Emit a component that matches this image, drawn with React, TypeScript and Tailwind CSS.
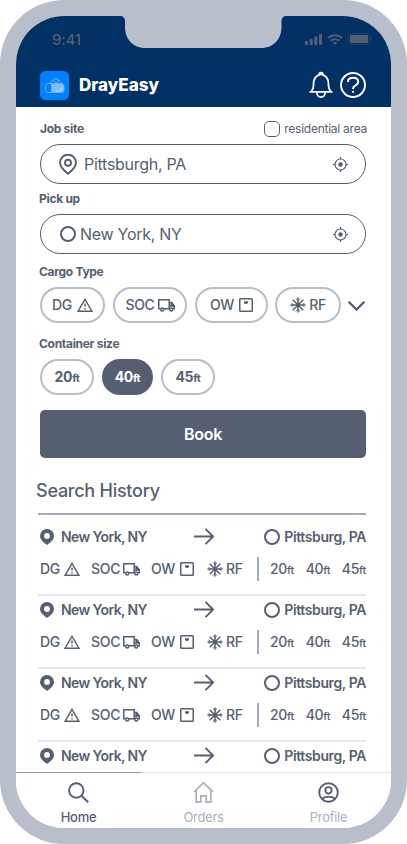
import type { ReactNode } from 'react';

type IconProps = { className?: string };

/* ---------- Icons ---------- */

function PinIcon({ className }: IconProps) {
  return (
    <svg className={className} width="18" height="21" viewBox="0 0 18 21" fill="none" stroke="currentColor" strokeWidth="1.9">
      <path d="M9 19.800C7 17.900 1 13.600 1 8.700a8 8 0 0 1 16 0c0 4.900-6 9.200-8 11.100Z" strokeLinejoin="round" />
      <circle cx="9" cy="8.700" r="3" />
    </svg>
  );
}

function PinSolidIcon({ className }: IconProps) {
  return (
    <svg className={className} width="14" height="16" viewBox="0 0 14 16" fill="currentColor">
      <path fillRule="evenodd" d="M7 16C5 14.200 0 11.200 0 7a7 7 0 0 1 14 0c0 4.200-5 7.200-7 9ZM7 9.800a2.900 2.900 0 1 0 0-5.800 2.900 2.900 0 0 0 0 5.800Z" />
    </svg>
  );
}

function TargetIcon({ className }: IconProps) {
  return (
    <svg className={className} width="15" height="15" viewBox="0 0 15 15" fill="none" stroke="currentColor" strokeWidth="1.200">
      <circle cx="7.500" cy="7.500" r="5.500" />
      <circle cx="7.500" cy="7.500" r="2.200" fill="currentColor" stroke="none" />
      <path d="M7.500 0v2M7.500 13v2M0 7.500h2M13 7.500h2" />
    </svg>
  );
}

function WarningIcon() {
  return (
    <svg width="16" height="14" viewBox="0 0 16 14" fill="none" stroke="currentColor" strokeWidth="1.400">
      <path d="M8 1.300 15 13.300H1Z" />
      <path d="M8 5.500v3.300M8 10v1.500" />
    </svg>
  );
}

function TruckIcon() {
  return (
    <svg width="17" height="13" viewBox="0 0 17 13" fill="none" stroke="currentColor" strokeWidth="1.500">
      <path d="M2.500 9.700H.8V.8h10.400v8.900H6M11.200 3.500h2.500l2.500 3.200v3h-1" />
      <path d="M11.500 7.500h4.700V6.500L13.900 3.800h-1.100v2.400h-1.300Z" fill="currentColor" strokeWidth=".5" />
      <circle cx="4.200" cy="10.500" r="1.500" />
      <circle cx="13.300" cy="10.500" r="1.500" />
    </svg>
  );
}

function ScaleIcon() {
  return (
    <svg width="14" height="14" viewBox="0 0 14 14" fill="none" stroke="currentColor" strokeWidth="1.500">
      <rect x=".75" y=".75" width="12.500" height="12.500" rx=".8" />
      <path d="M5 3.200h4v1.600L7.800 6H6.200L5 4.800Z" fill="currentColor" stroke="none" />
    </svg>
  );
}

function SnowIcon() {
  return (
    <svg width="16" height="16" viewBox="0 0 16 16" fill="none" stroke="currentColor" strokeWidth="1.500">
      <path d="M8 .5v15M.5 8h15M2.700 2.700l10.600 10.600M13.300 2.700 2.700 13.300" />
      <path d="M5.800 1.500 8 3.700l2.200-2.200M5.800 14.500 8 12.300l2.200 2.200M1.500 5.800 3.700 8l-2.200 2.200M14.500 5.800 12.300 8l2.200 2.200" strokeWidth=".9" />
    </svg>
  );
}

function ArrowIcon() {
  return (
    <svg width="20" height="17" viewBox="0 0 20 17" fill="none" stroke="currentColor" strokeWidth="1.900">
      <path d="M0 8.500h19M11.500.8l7.700 7.700-7.700 7.700" />
    </svg>
  );
}

function BellIcon() {
  return (
    <svg width="24" height="28" viewBox="0 0 24 28" fill="none" stroke="currentColor" strokeWidth="1.800">
      <path d="M.5 20.800h23M3 20.500v-1.300c1.300-1.200 1.500-3.400 1.500-6.200 0-5 2.300-8.500 7.500-9.800 5.200 1.300 7.500 4.800 7.500 9.800 0 2.800.2 5 1.500 6.200v1.300" />
      <path d="M10.200 3.500c0-2.600 3.600-2.600 3.600 0M7.800 21c0 3 1.700 5.200 4.200 5.200s4.200-2.200 4.200-5.200" />
    </svg>
  );
}

function HelpIcon() {
  return (
    <svg width="26" height="26" viewBox="0 0 26 26" fill="none" stroke="currentColor" strokeWidth="1.900">
      <circle cx="13" cy="13" r="12" />
      <path d="M7.800 9.800c.3-2.600 2.300-4 5.200-4s5.200 1.400 5.200 4-2.200 3.400-3.700 4.300c-1.100.7-1.500 1.400-1.500 3" />
      <path d="M13 18.800v2" />
    </svg>
  );
}

function LogoIcon() {
  return (
    <svg width="29" height="29" viewBox="0 0 29 29" fill="none">
      <rect width="29" height="29" rx="5.500" fill="#0080ff" />
      <path d="M11.500 13h11l1.500 2v4.500l-1.500 2h-11Z" fill="#80bfff" />
      <path d="M22.500 12.500H7c-1 .7-1.500 2.500-1.500 4.500s.5 3.800 1.500 4.500h15.500l1.500-2V15ZM11.500 12.500v9" stroke="#66b2ff" />
      <path d="M10 12.500c.8-2.500 2.500-3 4-3.500l1.500-1.500L18 9c1.500.5 3.300 1.500 4 3.500M13 9.500l3 2.500 3-2.500" stroke="#66b2ff" />
      <path d="M16 20h1.500M19 20h1.500M21 18h1" stroke="#d9ecff" />
    </svg>
  );
}

function SearchIcon() {
  return (
    <svg width="21" height="21" viewBox="0 0 21 21" fill="none" stroke="currentColor" strokeWidth="1.900">
      <circle cx="8.300" cy="8.500" r="7.200" />
      <path d="m13.500 13.700 6.700 6.500" />
    </svg>
  );
}

function HomeIcon() {
  return (
    <svg width="21" height="21" viewBox="0 0 21 21" fill="none" stroke="currentColor" strokeWidth="1.700">
      <path d="m.8 10 9.700-9.200 9.700 9.200" />
      <path d="M3.200 8.200v12h4.600v-6.400h5.400v6.400h4.600v-12" />
    </svg>
  );
}

function ProfileIcon() {
  return (
    <svg width="21" height="21" viewBox="0 0 21 21" fill="none" stroke="currentColor" strokeWidth="1.900">
      <circle cx="10.500" cy="10.500" r="9.300" />
      <circle cx="10.500" cy="8.300" r="3.200" />
      <path d="M4 16.800c2-1.600 4-2.200 6.500-2.200s4.500.6 6.500 2.200" />
    </svg>
  );
}

/* ---------- Data ---------- */

const cargoTypes = [
  { label: 'DG', icon: <WarningIcon />, pill: 'w-[65px] gap-[5px]', chip: 'w-[51px] gap-1' },
  { label: 'SOC', icon: <TruckIcon />, pill: 'w-[74px] gap-[3px]', chip: 'w-[60px] gap-[3px]' },
  { label: 'OW', icon: <ScaleIcon />, pill: 'w-[73px] gap-[5px]', chip: 'w-14 gap-[5px]' },
  { label: 'RF', icon: <SnowIcon />, pill: 'w-[66px] gap-[3px] flex-row-reverse', chip: 'gap-[3px] flex-row-reverse' },
];

// the last entry only peeks out above the tab bar
const history = [
  { id: 1, details: true },
  { id: 2, details: true },
  { id: 3, details: true },
  { id: 4, details: false },
];

/* ---------- Parts ---------- */

function StatusBar() {
  return (
    <div className="flex h-[46px] items-center justify-between pl-9 pr-[19px] text-[#555f71]">
      <span className="w-[30px] text-[15px] leading-none font-medium tracking-[-0.200px]">9:41</span>
      <div className="flex items-center gap-[5px]">
        <svg width="17" height="11" viewBox="0 0 17 11" fill="currentColor">
          <rect y="7" width="3" height="4" rx=".8" />
          <rect x="4.700" y="5" width="3" height="6" rx=".8" />
          <rect x="9.300" y="2.500" width="3" height="8.500" rx=".8" />
          <rect x="14" width="3" height="11" rx=".8" />
        </svg>
        <svg width="16" height="11" viewBox="0 0 16 11" fill="none" stroke="currentColor" strokeWidth="2">
          <path d="M1 4c4-3.700 10-3.700 14 0M3.700 6.800c2.500-2.200 6.100-2.200 8.600 0" />
          <path d="M8 11 5.800 8.800c1.300-1 3.100-1 4.400 0Z" fill="currentColor" stroke="none" />
        </svg>
        <svg width="24" height="12" viewBox="0 0 24 12" fill="none">
          <rect x=".5" y=".5" width="21" height="11" rx="3" stroke="currentColor" strokeOpacity=".4" />
          <rect x="2" y="2" width="18" height="8" rx="1" fill="currentColor" />
          <path d="M23 4v4" stroke="currentColor" strokeOpacity=".5" />
        </svg>
      </div>
    </div>
  );
}

function Field({ icon, value }: { icon: ReactNode; value: string }) {
  return (
    <div className="flex h-10 items-center rounded-full border border-[#555f71] pl-[18px] pr-[17px]">
      {icon}
      <span className="text-base leading-none tracking-[-0.280px]">{value}</span>
      <TargetIcon className="ml-auto" />
    </div>
  );
}

function Size({ value }: { value: string }) {
  return (
    <span className="whitespace-nowrap">
      {value}
      <span className="text-[11px]">ft</span>
    </span>
  );
}

function HistoryItem({ details }: { details: boolean }) {
  return (
    <div className="h-[73px] shrink-0 border-b-2 border-[#e6e7ec]">
      <div className="flex h-[27px] items-center pl-0.5 text-sm font-semibold">
        <PinSolidIcon />
        <span className="ml-[7px] w-[133px] tracking-[-0.600px]">New York, NY</span>
        <ArrowIcon />
        <span className="ml-auto flex items-center gap-1 tracking-[-0.400px]">
          <span className="size-4 rounded-full border-2 border-[#555f71]" />
          Pittsburg, PA
        </span>
      </div>
      {details && (
        <div className="mt-[7px] flex h-6 items-center pl-0.5 text-sm font-medium tracking-[-0.300px]">
          {cargoTypes.map((cargo) => (
            <span key={cargo.label} className={`flex items-center ${cargo.chip}`}>
              {cargo.label}
              {cargo.icon}
            </span>
          ))}
          <div className="ml-auto flex h-6 w-[109px] items-center justify-between border-l-2 border-[#a3abb8] pl-[11px]">
            <Size value="20" />
            <Size value="40" />
            <Size value="45" />
          </div>
        </div>
      )}
    </div>
  );
}

export default function App() {
  return (
    <div className="h-[844px] w-[407px] overflow-hidden bg-white font-['Inter',sans-serif] text-[#555f71]">
      <div className="h-full w-full rounded-[64px] bg-[#b8bfca] p-4">
        <div className="relative flex h-[812px] w-[375px] flex-col overflow-hidden rounded-[48px] bg-white">
          {/* Notch */}
          <svg className="absolute left-[104px] top-0" width="166" height="32" viewBox="0 0 166 32" fill="#b8bfca">
            <path d="M0 0h166c-3 0-4.500 2-4.500 5v6c0 12-8 21-20 21H25C13 32 5 23 5 11V5c0-3-2-5-5-5Z" />
          </svg>

          <header className="h-[91px] shrink-0 bg-[#003064] text-white">
            <StatusBar />
            <div className="flex h-[46px] items-center pl-6 pr-[25px]">
              <LogoIcon />
              <span className="ml-2.5 text-[17px] leading-none font-extrabold">DrayEasy</span>
              <div className="ml-auto flex items-center gap-[7px]">
                <BellIcon />
                <HelpIcon />
              </div>
            </div>
          </header>

          <main className="flex min-h-0 flex-1 flex-col overflow-hidden pl-6 pr-[25px]">
            {/* Route */}
            <div className="mt-[13px] flex h-[17px] shrink-0 items-center justify-between text-xs">
              <span className="font-bold tracking-[-0.300px]">Job site</span>
              <span className="-mr-px flex items-center gap-1 tracking-[-0.250px]">
                <span className="size-4 rounded-[5px] border border-[#555f71]" />
                residential area
              </span>
            </div>
            <div className="mt-[7px] shrink-0">
              <Field icon={<PinIcon className="mr-[7px]" />} value="Pittsburgh, PA" />
            </div>
            <div className="-ml-px flex h-[30px] shrink-0 items-center text-xs font-bold tracking-[-0.300px]">Pick up</div>
            <div className="shrink-0">
              <Field
                icon={<span className="ml-px mr-1 size-4 rounded-full border-2 border-[#555f71]" />}
                value="New York, NY"
              />
            </div>

            {/* Cargo type */}
            <div className="-ml-px mt-[3px] flex h-[30px] shrink-0 items-center text-xs font-bold tracking-[-0.300px]">
              Cargo Type
            </div>
            <div className="flex h-9 shrink-0 items-center gap-2">
              {cargoTypes.map((cargo) => (
                <button
                  key={cargo.label}
                  className={`flex h-9 shrink-0 items-center justify-center rounded-full border-2 border-[#b8bec9] text-sm font-medium tracking-[-0.300px] last-of-type:-ml-px ${cargo.pill}`}
                >
                  {cargo.label}
                  {cargo.icon}
                </button>
              ))}
              <svg className="-ml-px mt-px shrink-0" width="17" height="10" viewBox="0 0 17 10" fill="none" stroke="currentColor" strokeWidth="2.200">
                <path d="m.7.800 7.800 7.700L16.300.8" />
              </svg>
            </div>

            {/* Container size */}
            <div className="-ml-px mt-1.5 flex h-[30px] shrink-0 items-center text-xs font-bold tracking-[-0.300px]">
              Container size
            </div>
            <div className="flex h-9 shrink-0 gap-2 text-sm font-bold tracking-[-0.300px]">
              <button className="w-[54px] rounded-full border-2 border-[#b8bec9]">
                <Size value="20" />
              </button>
              <button className="w-[51px] rounded-full bg-[#555f71] text-white">
                <Size value="40" />
              </button>
              <button className="w-[54px] rounded-full border-2 border-[#b8bec9]">
                <Size value="45" />
              </button>
            </div>

            <button className="mt-[15px] h-12 shrink-0 rounded-[5px] bg-[#555f71] text-base font-semibold tracking-[-0.300px] text-white">
              Book
            </button>

            {/* Search history */}
            <h2 className="-ml-1 mt-[18px] flex h-[30px] shrink-0 items-center text-lg font-medium tracking-[-0.250px]">
              Search History
            </h2>
            <div className="-ml-0.5 mt-[7px] flex flex-col border-t-2 border-[#a3abb8] pt-2">
              {history.map((item) => (
                <HistoryItem key={item.id} details={item.details} />
              ))}
            </div>
          </main>

          {/* Tab bar */}
          <nav className="grid h-14 shrink-0 grid-cols-3 bg-white text-[13px] leading-none tracking-[-0.300px]">
            <div className="flex flex-col items-center border-t border-[#8c95a5] pt-[9px] font-medium">
              <SearchIcon />
              <span className="mt-2">Home</span>
            </div>
            <div className="flex flex-col items-center border-t border-[#e3e5e9] pt-[9px] text-[#a9b0bc]">
              <HomeIcon />
              <span className="mt-2">Orders</span>
            </div>
            <div className="flex flex-col items-center border-t border-[#e3e5e9] pt-[9px] text-[#a9b0bc]">
              <span className="text-[#555f71]">
                <ProfileIcon />
              </span>
              <span className="mt-2">Profile</span>
            </div>
          </nav>
        </div>
      </div>
    </div>
  );
}
